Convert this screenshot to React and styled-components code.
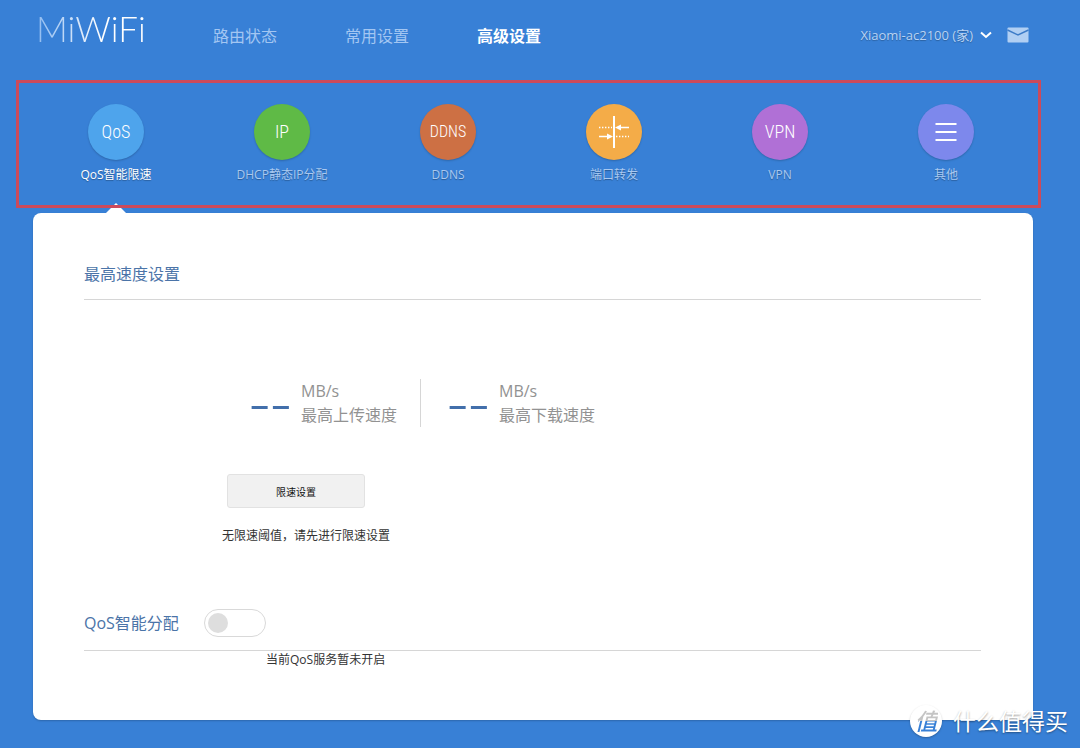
import React, { useState } from 'react';

import styled, { createGlobalStyle } from 'styled-components';

const GlobalStyle = createGlobalStyle`
    * {
        box-sizing: border-box;
    }

    body {
        margin: 0;
        background-color: #3880d6;
        color: #333;
        font-family: "Open Sans", "Noto Sans CJK SC", sans-serif;
        font-size: 12px;
        line-height: 18px;
    }

    button {
        font-family: inherit;
        cursor: pointer;
    }
`;

const Page = styled.div`
    position: relative;
    min-height: 100vh;
    padding-bottom: 28px;
`;

const Header = styled.header`
    display: flex;
    align-items: center;
    height: 70px;
    padding: 0 51px 0 36px;
`;

const Logo = styled.a`
    width: 177px;
    align-self: flex-start;
    padding-top: 8px;
    font-family: Lato, sans-serif;
    font-size: 35px;
    font-weight: 300;
    line-height: 40px;
    text-decoration: none;

    span {
        color: transparent;
        background: linear-gradient(90deg, #8fbbf0, #fff 60%);
        background-clip: text;
    }
`;

const MainNav = styled.nav`
    display: flex;
    flex: 1;
    gap: 68px;
    padding-top: 2px;
`;

const MainLink = styled.a`
    color: ${props => (props.$active ? '#fff' : '#a3c6f2')};
    font-size: 16px;
    font-weight: ${props => (props.$active ? 700 : 400)};
    line-height: 24px;
    text-decoration: none;
`;

const DeviceButton = styled.button`
    display: flex;
    align-items: center;
    gap: 7px;
    margin-right: 15px;
    padding: 0;
    border: 0;
    background: none;
    color: #b9d3f3;
    font-size: 13px;
    line-height: 18px;
    text-shadow: 0 1px 1px rgba(0, 0, 0, 0.25);
`;

const MailLink = styled.a`
    display: flex;
`;

const SubNav = styled.nav`
    position: relative;
    z-index: 1;
    display: grid;
    grid-template-columns: repeat(6, 1fr);
    margin: 10px 39px 5px 16px;
    padding: 21px 9px 21px 14px;
    border: 3px solid #cc4a5b;
`;

const SubLink = styled.a`
    display: flex;
    flex-direction: column;
    align-items: center;
    gap: 6px;
    color: ${props => (props.$active ? '#fff' : '#a9c9f1')};
    text-decoration: none;
    text-shadow: 0 1px 1px rgba(0, 0, 0, 0.3);
`;

const Circle = styled.span`
    display: flex;
    align-items: center;
    justify-content: center;
    width: 56px;
    height: 56px;
    border-radius: 50%;
    background-color: ${props => props.$color};
    box-shadow: 0 1px 2px rgba(0, 0, 0, 0.2);
    color: #fff;
    font-family: "Roboto Condensed", "Liberation Sans Narrow", "Open Sans", sans-serif;
    font-size: ${props => (props.$small ? 16 : 18)}px;
    font-weight: 300;
    text-shadow: none;
`;

const Panel = styled.main`
    position: relative;
    margin: 0 47px 0 33px;
    padding: 49px 52px 51px 51px;
    border-radius: 8px;
    background-color: #fff;
    box-shadow: 0 1px 2px rgba(0, 0, 0, 0.2);

    &::before {
        content: '';
        position: absolute;
        top: -10px;
        left: calc((100% - 4px) / 12 - 10px);
        width: 20px;
        height: 10px;
        background-color: #fff;
        clip-path: polygon(50% 0, 100% 100%, 0 100%);
    }
`;

const SectionHead = styled.div`
    display: flex;
    align-items: center;
    gap: 25px;
    padding-bottom: 13px;
    border-bottom: 1px solid #d6d6d6;
`;

const SectionTitle = styled.h2`
    margin: 0;
    color: #4b74a8;
    font-size: 16px;
    font-weight: 400;
    line-height: 24px;
`;

const Stats = styled.div`
    display: flex;
    padding: 79px 0 47px 165px;
`;

const Stat = styled.div`
    display: flex;
    align-items: center;
    gap: 8px;

    & + & {
        margin-left: 23px;
        padding-left: 26px;
        border-left: 1px solid #d6d6d6;
    }
`;

const StatValue = styled.span`
    width: 44px;
    padding-bottom: 8px;
    color: #426fab;
    font-size: 66px;
    font-weight: 300;
    line-height: 32px;
`;

const StatText = styled.span`
    color: #929292;
    font-size: 16px;
    line-height: 24px;

    span {
        display: block;
    }
`;

const LimitArea = styled.div`
    padding: 0 0 64px 138px;
`;

const LimitButton = styled.button`
    display: block;
    width: 138px;
    height: 34px;
    margin: 0 0 19px 5px;
    border: 1px solid #e2e2e2;
    border-radius: 3px;
    background-color: #f1f1f1;
    color: #111;
    font-size: 10px;
`;

const Note = styled.p`
    margin: 0;
    padding-left: ${props => (props.$indent ? '182px' : 0)};
`;

const Toggle = styled.input`
    appearance: none;
    display: flex;
    align-items: center;
    width: 62px;
    height: 28px;
    margin: 0;
    padding: 0 3px;
    border: 1px solid #d9d9d9;
    border-radius: 14px;
    background-color: #fff;
    cursor: pointer;

    &::before {
        content: '';
        width: 20px;
        height: 20px;
        border-radius: 50%;
        background-color: #dedede;
    }

    &:checked {
        justify-content: flex-end;
        background-color: #3880d6;
    }
`;

const Watermark = styled.div`
    position: absolute;
    right: 12px;
    bottom: 11px;
    display: flex;
    align-items: center;
    gap: 11px;
    color: #fff;
    font-size: 23px;
    line-height: 32px;
    text-shadow: 0 1px 2px rgba(0, 0, 0, 0.4);
`;

const Badge = styled.span`
    width: 32px;
    height: 32px;
    border-radius: 50%;
    background-color: #fff;
    box-shadow: 0 1px 2px rgba(0, 0, 0, 0.25);
    font-style: italic;
    font-weight: 500;
    text-align: center;
    text-shadow: none;

    span {
        color: transparent;
        background: linear-gradient(#c4c4c4 50%, #3880d6 50%);
        background-clip: text;
    }
`;

const ForwardIcon = () => (
    <svg width="32" height="32" viewBox="0 0 32 32" fill="none" stroke="#fff">
        <path d="M16 0v32" strokeWidth="2" />
        <path d="M1 11.5h13M18 20.5h13" strokeWidth="1.4" strokeDasharray="1.4 1.6" />
        <path d="M21 11.5h10M1 20.5h10" strokeWidth="1.7" />
        <path d="M17 11.5l6-3v6zM15 20.5l-6-3v6z" fill="#fff" stroke="none" />
    </svg>
);

const MenuIcon = () => (
    <svg width="22" height="20" viewBox="0 0 22 20" stroke="#fff" strokeWidth="2">
        <path d="M0.5 2h21M0.5 10h21M0.5 18h21" />
    </svg>
);

const ChevronIcon = () => (
    <svg width="12" height="8" viewBox="0 0 12 8" fill="none" stroke="#fff" strokeWidth="2">
        <path d="M1 1.5l5 4.5 5-4.5" />
    </svg>
);

const MailIcon = () => (
    <svg width="22" height="16" viewBox="0 0 22 16">
        <rect x="0.5" y="0.5" width="21" height="15" rx="1" fill="#b1cff3" />
        <path d="M0.5 3l10.5 5 10.5-5" fill="none" stroke="#3e7cc8" strokeWidth="1.4" />
    </svg>
);

const mainLinks = ['路由状态', '常用设置', '高级设置'];

const subLinks = [
    { label: 'QoS智能限速', color: '#4ea4ec', icon: 'QoS' },
    { label: 'DHCP静态IP分配', color: '#5fba46', icon: 'IP' },
    { label: 'DDNS', color: '#cd7044', icon: 'DDNS', small: true },
    { label: '端口转发', color: '#f4ac48', icon: <ForwardIcon /> },
    { label: 'VPN', color: '#b070d6', icon: 'VPN' },
    { label: '其他', color: '#7d88ec', icon: <MenuIcon /> },
];

const stats = ['最高上传速度', '最高下载速度'];

const App = () => {
    const [mainTab, setMainTab] = useState(2);
    const [qosOn, setQosOn] = useState(false);

    return (
        <Page>
            <GlobalStyle />
            <Header>
                <Logo href="#home"><span>MiWiFi</span></Logo>
                <MainNav>
                    {mainLinks.map((label, i) => (
                        <MainLink key={label} href="#main" $active={i === mainTab} onClick={() => setMainTab(i)}>
                            {label}
                        </MainLink>
                    ))}
                </MainNav>
                <DeviceButton type="button">
                    Xiaomi-ac2100 (家)
                    <ChevronIcon />
                </DeviceButton>
                <MailLink href="#mail" aria-label="消息"><MailIcon /></MailLink>
            </Header>
            <SubNav>
                {subLinks.map((item, i) => (
                    <SubLink key={item.label} href="#sub" $active={i === 0}>
                        <Circle $color={item.color} $small={item.small}>{item.icon}</Circle>
                        <span>{item.label}</span>
                    </SubLink>
                ))}
            </SubNav>
            <Panel>
                <SectionHead>
                    <SectionTitle>最高速度设置</SectionTitle>
                </SectionHead>
                <Stats>
                    {stats.map(label => (
                        <Stat key={label}>
                            <StatValue>--</StatValue>
                            <StatText>
                                <span>MB/s</span>
                                <span>{label}</span>
                            </StatText>
                        </Stat>
                    ))}
                </Stats>
                <LimitArea>
                    <LimitButton type="button">限速设置</LimitButton>
                    <Note>无限速阈值，请先进行限速设置</Note>
                </LimitArea>
                <SectionHead>
                    <SectionTitle as="label" htmlFor="qos">QoS智能分配</SectionTitle>
                    <Toggle
                        id="qos"
                        type="checkbox"
                        checked={qosOn}
                        onChange={() => setQosOn(!qosOn)}
                    />
                </SectionHead>
                <Note $indent>当前QoS服务暂未开启</Note>
            </Panel>
            <Watermark>
                <Badge><span>值</span></Badge>
                什么值得买
            </Watermark>
        </Page>
    );
}

export default App;
